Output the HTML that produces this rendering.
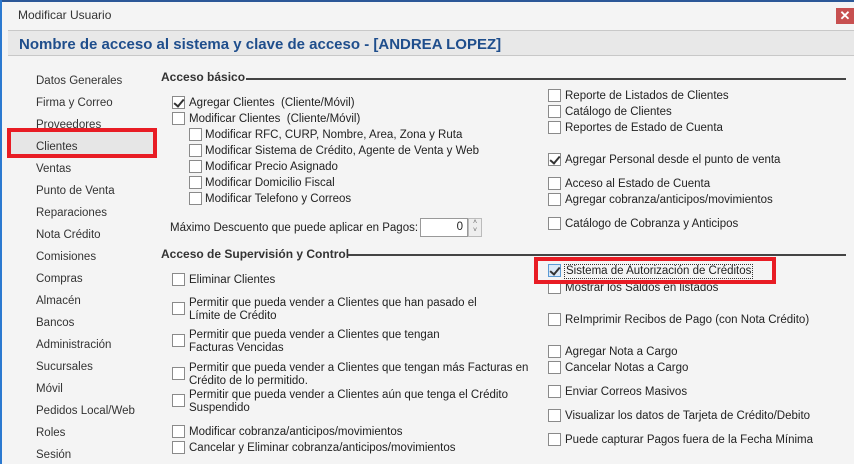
<!DOCTYPE html>
<html><head><meta charset="utf-8"><style>
*{margin:0;padding:0;box-sizing:border-box}
body{width:854px;height:464px;overflow:hidden;background:#f4f4f4;font-family:"Liberation Sans",sans-serif;font-size:11.5px;color:#222;position:relative}
.a{position:absolute;white-space:nowrap;line-height:13px;margin-top:1px}
.cb{position:absolute;width:13px;height:13px;border:1px solid #8a8a8a;background:#fff}
.ck::after{content:"";position:absolute;left:3px;top:0px;width:4px;height:8px;border:solid #333;border-width:0 2px 2px 0;transform:rotate(40deg)}
.n{position:absolute;left:36px;color:#333}
.h{font-weight:bold;color:#333;font-size:12px}
.ln{position:absolute;height:2px;background:#444}
</style></head><body>
<div style="position:absolute;left:0;top:0;width:854px;height:2px;background:#2b5797"></div>
<div style="position:absolute;left:0;top:0;width:2px;height:464px;background:#2b79d0"></div>
<div class="a" style="left:18px;top:8px;font-size:12px;color:#333">Modificar Usuario</div>
<div style="position:absolute;left:836px;top:8px;width:18px;height:16px;background:#c75050;color:#fff;font-weight:bold;font-size:13px;text-align:center;line-height:16px">✕</div>
<div style="position:absolute;left:8px;top:30px;width:846px;height:26px;background:#e8e8e8;border-top:1px solid #c8c8c8;border-bottom:1px solid #c8c8c8"></div>
<div class="a" style="left:19px;top:36px;font-size:15px;line-height:16px;font-weight:bold;color:#1f4e8c">Nombre de acceso al sistema y clave de acceso - [ANDREA LOPEZ]</div>

<div class="n a" style="top:74px">Datos Generales</div>
<div class="n a" style="top:96px">Firma y Correo</div>
<div class="n a" style="top:118px">Proveedores</div>
<div style="position:absolute;left:7px;top:128px;width:150px;height:30px;border:4px solid #e81c24;background:#e6e6e6"></div>
<div class="n a" style="top:140px">Clientes</div>
<div class="n a" style="top:162px">Ventas</div>
<div class="n a" style="top:184px">Punto de Venta</div>
<div class="n a" style="top:206px">Reparaciones</div>
<div class="n a" style="top:228px">Nota Crédito</div>
<div class="n a" style="top:250px">Comisiones</div>
<div class="n a" style="top:272px">Compras</div>
<div class="n a" style="top:294px">Almacén</div>
<div class="n a" style="top:316px">Bancos</div>
<div class="n a" style="top:338px">Administración</div>
<div class="n a" style="top:360px">Sucursales</div>
<div class="n a" style="top:382px">Móvil</div>
<div class="n a" style="top:404px">Pedidos Local/Web</div>
<div class="n a" style="top:426px">Roles</div>
<div class="n a" style="top:448px">Sesión</div>

<div class="a h" style="left:161px;top:70px">Acceso básico</div>
<div class="ln" style="left:246px;top:78px;width:600px"></div>
<div class="cb ck" style="left:172px;top:96px"></div><div class="a" style="left:189px;top:96px">Agregar Clientes &nbsp;(Cliente/Móvil)</div>
<div class="cb" style="left:172px;top:112px"></div><div class="a" style="left:189px;top:112px">Modificar Clientes &nbsp;(Cliente/Móvil)</div>
<div class="cb" style="left:189px;top:128px"></div><div class="a" style="left:205px;top:128px">Modificar RFC, CURP, Nombre, Area, Zona y Ruta</div>
<div class="cb" style="left:189px;top:144px"></div><div class="a" style="left:205px;top:144px">Modificar Sistema de Crédito, Agente de Venta y Web</div>
<div class="cb" style="left:189px;top:160px"></div><div class="a" style="left:205px;top:160px">Modificar Precio Asignado</div>
<div class="cb" style="left:189px;top:176px"></div><div class="a" style="left:205px;top:176px">Modificar Domicilio Fiscal</div>
<div class="cb" style="left:189px;top:192px"></div><div class="a" style="left:205px;top:192px">Modificar Telefono y Correos</div>
<div class="a" style="left:170px;top:221px">Máximo Descuento que puede aplicar en Pagos:</div>
<div style="position:absolute;left:420px;top:218px;width:48px;height:19px;background:#fff;border:1px solid #999;text-align:right;padding-right:4px;line-height:17px">0</div>
<div style="position:absolute;left:468px;top:218px;width:14px;height:19px;background:#eee;border:1px solid #bbb;font-size:7px;line-height:8px;text-align:center;color:#666">˄<br>˅</div>

<div class="a h" style="left:161px;top:247px">Acceso de Supervisión y Control</div>
<div class="ln" style="left:348px;top:254px;width:498px"></div>
<div class="cb" style="left:172px;top:273px"></div><div class="a" style="left:189px;top:273px">Eliminar Clientes</div>
<div class="cb" style="left:172px;top:302px"></div><div class="a" style="left:189px;top:296px">Permitir que pueda vender a Clientes que han pasado el<br>Límite de Crédito</div>
<div class="cb" style="left:172px;top:334px"></div><div class="a" style="left:189px;top:328px">Permitir que pueda vender a Clientes que tengan<br>Facturas Vencidas</div>
<div class="cb" style="left:172px;top:367px"></div><div class="a" style="left:189px;top:361px">Permitir que pueda vender a Clientes que tengan más Facturas en<br>Crédito de lo permitido.</div>
<div class="cb" style="left:172px;top:394px"></div><div class="a" style="left:189px;top:388px">Permitir que pueda vender a Clientes aún que tenga el Crédito<br>Suspendido</div>
<div class="cb" style="left:172px;top:425px"></div><div class="a" style="left:189px;top:425px">Modificar cobranza/anticipos/movimientos</div>
<div class="cb" style="left:172px;top:441px"></div><div class="a" style="left:189px;top:441px">Cancelar y Eliminar cobranza/anticipos/movimientos</div>

<div class="cb" style="left:548px;top:89px"></div><div class="a" style="left:565px;top:89px">Reporte de Listados de Clientes</div>
<div class="cb" style="left:548px;top:105px"></div><div class="a" style="left:565px;top:105px">Catálogo de Clientes</div>
<div class="cb" style="left:548px;top:121px"></div><div class="a" style="left:565px;top:121px">Reportes de Estado de Cuenta</div>
<div class="cb ck" style="left:548px;top:153px"></div><div class="a" style="left:565px;top:153px">Agregar Personal desde el punto de venta</div>
<div class="cb" style="left:548px;top:177px"></div><div class="a" style="left:565px;top:177px">Acceso al Estado de Cuenta</div>
<div class="cb" style="left:548px;top:193px"></div><div class="a" style="left:565px;top:193px">Agregar cobranza/anticipos/movimientos</div>
<div class="cb" style="left:548px;top:217px"></div><div class="a" style="left:565px;top:217px">Catálogo de Cobranza y Anticipos</div>
<div class="cb" style="left:548px;top:281px"></div><div class="a" style="left:565px;top:281px">Mostrar los Saldos en listados</div>
<div style="position:absolute;left:534px;top:257px;width:242px;height:27px;border:4px solid #e81c24;background:#f4f4f4"></div>
<div class="cb ck" style="left:548px;top:264px;border-color:#5b9bd5;background:#dbe9f7"></div><div class="a" style="left:564px;top:263px;border:1px dotted #333;padding:0 1px">Sistema de Autorización de Créditos</div>
<div class="cb" style="left:548px;top:313px"></div><div class="a" style="left:565px;top:313px">ReImprimir Recibos de Pago (con Nota Crédito)</div>
<div class="cb" style="left:548px;top:345px"></div><div class="a" style="left:565px;top:345px">Agregar Nota a Cargo</div>
<div class="cb" style="left:548px;top:361px"></div><div class="a" style="left:565px;top:361px">Cancelar Notas a Cargo</div>
<div class="cb" style="left:548px;top:385px"></div><div class="a" style="left:565px;top:385px">Enviar Correos Masivos</div>
<div class="cb" style="left:548px;top:409px"></div><div class="a" style="left:565px;top:409px">Visualizar los datos de Tarjeta de Crédito/Debito</div>
<div class="cb" style="left:548px;top:433px"></div><div class="a" style="left:565px;top:433px">Puede capturar Pagos fuera de la Fecha Mínima</div>
</body></html>
